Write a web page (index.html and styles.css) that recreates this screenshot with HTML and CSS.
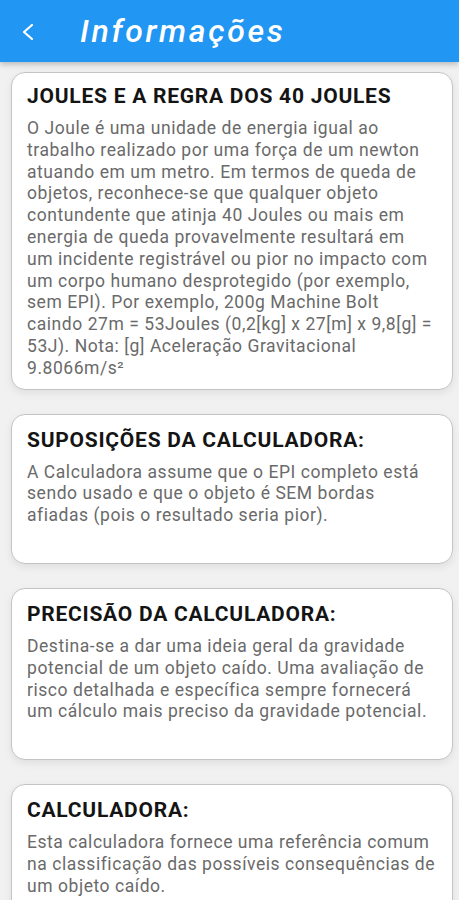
FILE: index.html
```html
<!DOCTYPE html>
<html lang="pt">
<head>
<meta charset="utf-8">
<title>Informações</title>
<link rel="stylesheet" href="styles.css">
</head>
<body>
<header class="appbar">
  <span class="back">
    <svg width="14" height="18" viewBox="0 0 14 18"><path d="M11 2 L3 9 L11 16" fill="none" stroke="#ffffff" stroke-width="2.2" stroke-linecap="round" stroke-linejoin="round"/></svg>
  </span>
  <h1 class="title">Informações</h1>
</header>
<main class="content">
  <section class="card">
    <h2 class="card-title">JOULES E A REGRA DOS 40 JOULES</h2>
    <p class="card-text">O Joule é uma unidade de energia igual ao<br>trabalho realizado por uma força de um newton<br>atuando em um metro. Em termos de queda de<br>objetos, reconhece-se que qualquer objeto<br>contundente que atinja 40 Joules ou mais em<br>energia de queda provavelmente resultará em<br>um incidente registrável ou pior no impacto com<br>um corpo humano desprotegido (por exemplo,<br>sem EPI). Por exemplo, 200g Machine Bolt<br>caindo 27m = 53Joules (0,2[kg] x 27[m] x 9,8[g] =<br>53J). Nota: [g] Aceleração Gravitacional<br>9.8066m/s²</p>
  </section>
  <section class="card card-tall">
    <h2 class="card-title">SUPOSIÇÕES DA CALCULADORA:</h2>
    <p class="card-text">A Calculadora assume que o EPI completo está<br>sendo usado e que o objeto é SEM bordas<br>afiadas (pois o resultado seria pior).</p>
  </section>
  <section class="card card-tall">
    <h2 class="card-title">PRECISÃO DA CALCULADORA:</h2>
    <p class="card-text">Destina-se a dar uma ideia geral da gravidade<br>potencial de um objeto caído. Uma avaliação de<br>risco detalhada e específica sempre fornecerá<br>um cálculo mais preciso da gravidade potencial.</p>
  </section>
  <section class="card card-tall">
    <h2 class="card-title">CALCULADORA:</h2>
    <p class="card-text">Esta calculadora fornece uma referência comum<br>na classificação das possíveis consequências de<br>um objeto caído.</p>
  </section>
</main>
</body>
</html>
```
FILE: styles.css
```css
html, body {
  margin: 0;
  padding: 0;
}
body {
  background: #f1f1f1;
  font-family: Roboto, "Liberation Sans", sans-serif;
  width: 459px;
  height: 900px;
  overflow: hidden;
}
.appbar {
  height: 62px;
  background: #2196f3;
  display: flex;
  align-items: center;
  box-shadow: 0 2px 6px rgba(0,0,0,0.25);
  position: relative;
  z-index: 1;
}
.back {
  width: 14px;
  height: 18px;
  margin-left: 21px;
  margin-top: 1px;
  display: flex;
}
.title {
  margin: 0 0 0 45px;
  color: #ffffff;
  font-style: italic;
  font-weight: 500;
  font-size: 32px;
  letter-spacing: 2.7px;
}
.content {
  padding: 10px 6px 0 11px;
  display: flex;
  flex-direction: column;
  gap: 24px;
}
.card {
  background: #ffffff;
  border: 1px solid #c4c4c4;
  border-radius: 14px;
  box-shadow: 0 3px 8px rgba(0,0,0,0.08);
  padding: 9px 12px 9px 15px;
}
.card-tall {
  padding-bottom: 36px;
}
.card-title {
  margin: 0 0 8px 0;
  font-size: 21px;
  font-weight: 700;
  color: #141414;
  line-height: 28px;
  letter-spacing: 0.75px;
}
.card-tall .card-title {
  margin-top: 2px;
}
.card-text {
  margin: 0;
  font-size: 17.5px;
  line-height: 21.8px;
  letter-spacing: 0.55px;
  white-space: nowrap;
  color: #6a6a6a;
}
```
